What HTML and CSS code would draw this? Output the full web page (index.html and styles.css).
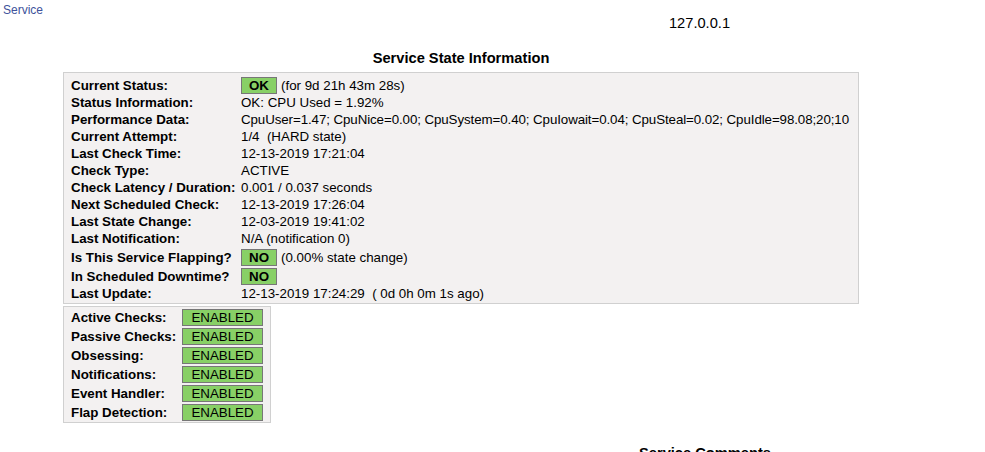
FILE: index.html
```html
<!DOCTYPE html>
<html lang="en">
<head>
<meta charset="utf-8">
<title>Service Information</title>
<link rel="stylesheet" href="styles.css">
</head>
<body>
<div class="page">
  <header class="top">
    <div class="top-left"><a class="nav-link" href="#">Service</a></div>
    <div class="top-center"><div class="hostname">127.0.0.1</div></div>
    <div class="top-right"></div>
  </header>

  <main class="panels">
    <section class="state-panel">
      <div class="data-title">Service State Information</div>
      <div class="info-box state-table">
        <div class="var badge-row">Current Status:</div>
        <div class="val badge-row"><span class="badge badge-status">OK</span><span class="after">(for 9d 21h 43m 28s)</span></div>

        <div class="var">Status Information:</div>
        <div class="val">OK: CPU Used = 1.92%</div>

        <div class="var">Performance Data:</div>
        <div class="val perf">CpuUser=1.47; CpuNice=0.00; CpuSystem=0.40; CpuIowait=0.04; CpuSteal=0.02; CpuIdle=98.08;20;10</div>

        <div class="var">Current Attempt:</div>
        <div class="val">1/4&nbsp;&nbsp;(HARD state)</div>

        <div class="var">Last Check Time:</div>
        <div class="val">12-13-2019 17:21:04</div>

        <div class="var">Check Type:</div>
        <div class="val">ACTIVE</div>

        <div class="var">Check Latency / Duration:</div>
        <div class="val">0.001&nbsp;/&nbsp;0.037 seconds</div>

        <div class="var">Next Scheduled Check:</div>
        <div class="val">12-13-2019 17:26:04</div>

        <div class="var">Last State Change:</div>
        <div class="val">12-03-2019 19:41:02</div>

        <div class="var">Last Notification:</div>
        <div class="val">N/A (notification 0)</div>

        <div class="var badge-row">Is This Service Flapping?</div>
        <div class="val badge-row"><span class="badge badge-status">NO</span><span class="after">(0.00% state change)</span></div>

        <div class="var badge-row">In Scheduled Downtime?</div>
        <div class="val badge-row"><span class="badge badge-status">NO</span></div>

        <div class="var">Last Update:</div>
        <div class="val">12-13-2019 17:24:29&nbsp;&nbsp;( 0d 0h 0m 1s ago)</div>
      </div>

      <div class="info-box checks-table">
        <div class="var badge-row">Active Checks:</div>
        <div class="val badge-row"><span class="badge badge-check">ENABLED</span></div>

        <div class="var badge-row">Passive Checks:</div>
        <div class="val badge-row"><span class="badge badge-check">ENABLED</span></div>

        <div class="var badge-row">Obsessing:</div>
        <div class="val badge-row"><span class="badge badge-check">ENABLED</span></div>

        <div class="var badge-row">Notifications:</div>
        <div class="val badge-row"><span class="badge badge-check">ENABLED</span></div>

        <div class="var badge-row">Event Handler:</div>
        <div class="val badge-row"><span class="badge badge-check">ENABLED</span></div>

        <div class="var badge-row">Flap Detection:</div>
        <div class="val badge-row"><span class="badge badge-check">ENABLED</span></div>
      </div>
    </section>
    <section class="commands-panel"></section>
  </main>

  <section class="comments-panel">
    <div class="data-title">Service Comments</div>
  </section>
</div>
</body>
</html>
```

FILE: styles.css
```css
html, body {
  overflow: hidden;
}

body {
  margin: 0;
  background: #ffffff;
  color: #000000;
  font-family: "Liberation Sans", Arial, sans-serif;
}

.page {
  width: 1410px;
}

/* top bar */
.top {
  display: grid;
  grid-template-columns: 1fr auto 1fr;
  width: 1399px;
  height: 32px;
}

.nav-link {
  display: inline-block;
  padding-left: 3px;
  font-size: 12px;
  line-height: 14px;
  color: #40529b;
  text-decoration: none;
}

.hostname {
  padding-top: 15px;
  font-size: 14.67px;
  line-height: 17px;
  color: #000000;
}

/* panels */
.panels {
  display: grid;
  grid-template-columns: 922px 1fr;
  margin-top: 18px;
}

.state-panel {
  justify-self: center;
  width: 796px;
}

.data-title {
  font-size: 14.67px;
  font-weight: bold;
  line-height: 17px;
  text-align: center;
  white-space: nowrap;
}

.state-panel .data-title {
  margin-bottom: 5px;
}

.info-box {
  display: grid;
  box-sizing: border-box;
  background: #f3f1f1;
  border: 1px solid #d0d0d0;
  font-size: 13.33px;
  line-height: 17px;
}

.state-table {
  grid-template-columns: 170px 1fr;
  width: 796px;
  padding: 2px 7px 1px;
}

.checks-table {
  grid-template-columns: 111px auto;
  width: 208px;
  margin-top: 2px;
  padding: 0 7px 1px;
}

.var {
  font-weight: bold;
  white-space: nowrap;
}

.val {
  display: flex;
  white-space: nowrap;
}

.perf {
  letter-spacing: -0.09px;
}

.badge-row {
  padding-top: 2px;
}

.badge {
  box-sizing: border-box;
  height: 17px;
  line-height: 15px;
  background: #88d066;
  border: 1px solid #777777;
  text-align: center;
}

.badge-status {
  width: 36px;
  font-weight: bold;
}

.badge-check {
  width: 81px;
}

.after {
  margin-left: 4px;
}

/* comments */
.comments-panel {
  margin-top: 22px;
}
```
